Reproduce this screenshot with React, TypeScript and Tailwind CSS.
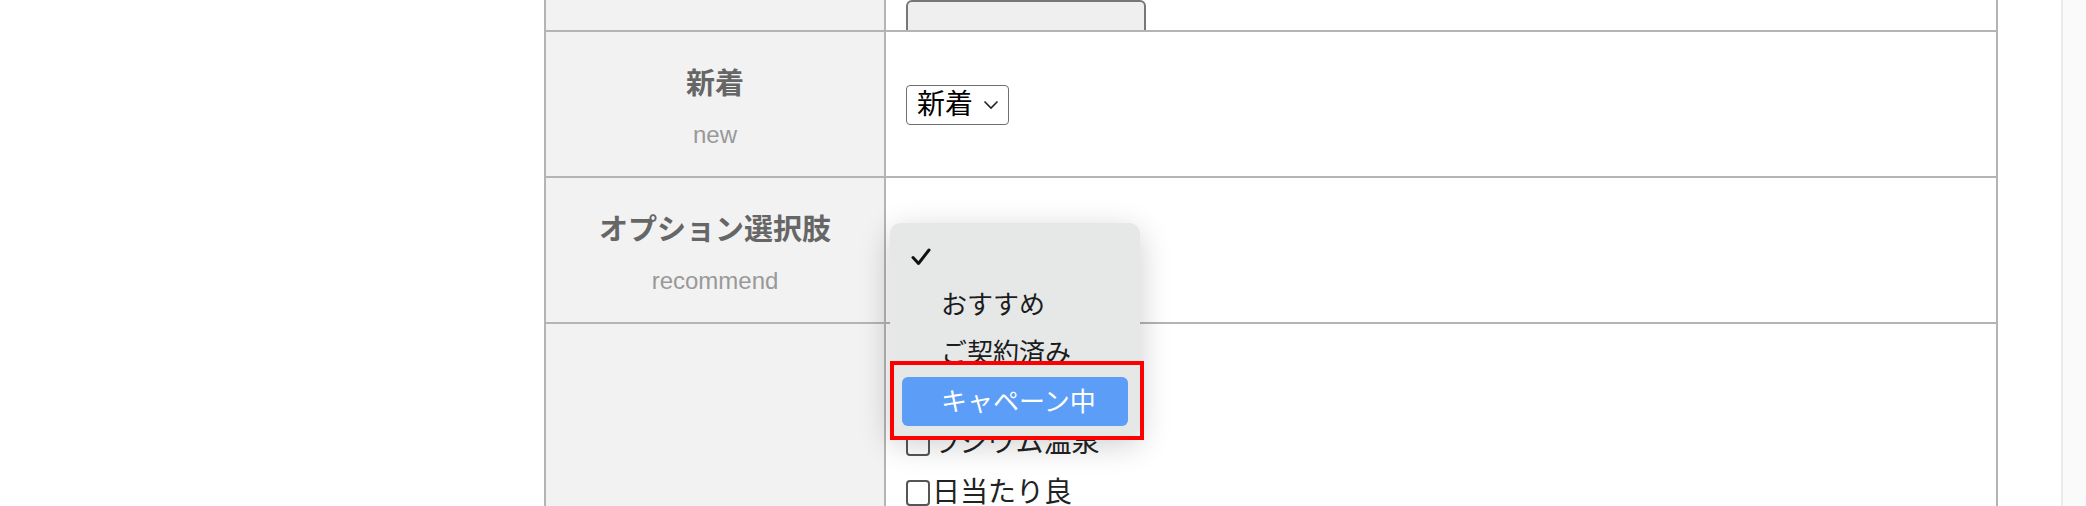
import React from 'react';

const jp = "font-['Liberation_Sans','Noto_Sans_CJK_JP',sans-serif]";

const menuItems = ['おすすめ', 'ご契約済み'];

const Label: React.FC<{ title: string; sub: string }> = ({ title, sub }) => (
  <div className="flex flex-col items-center justify-center bg-[#f2f2f2] pt-[8px]">
    <div className="text-[29px] font-bold leading-[40px] text-[#666]">{title}</div>
    <div className="mt-[14px] text-[24px] leading-[34px] text-[#999]">{sub}</div>
  </div>
);

const App: React.FC = () => {
  return (
    <div className={`flex h-[506px] w-[2086px] overflow-hidden bg-white ${jp}`}>
      <div className="w-[544px] shrink-0" />

      <div className="relative flex w-[1454px] shrink-0 flex-col border-x-2 border-[#b4b4b4]">
        {/* row cut off at the top */}
        <div className="grid h-[32px] shrink-0 grid-cols-[338px_2px_1fr] overflow-hidden border-b-2 border-[#b4b4b4]">
          <div className="bg-[#f2f2f2]" />
          <div className="bg-[#b4b4b4]" />
          <div className="flex items-end pb-[22px] pl-[20px]">
            <div className="h-[40px] w-[240px] shrink-0 rounded-[6px] border-2 border-[#777] bg-[#efefef]" />
          </div>
        </div>

        <div className="grid h-[146px] shrink-0 grid-cols-[338px_2px_1fr] border-b-2 border-[#b4b4b4]">
          <Label title="新着" sub="new" />
          <div className="bg-[#b4b4b4]" />
          <div className="flex items-center pl-[20px] pt-[2px]">
            <div className="flex h-[40px] w-[103px] items-center gap-[10px] rounded-[4px] border-[1.5px] border-[#6f6f6f] pl-[10px] text-[28px] leading-none text-black">
              <span>新着</span>
              <svg width="16" height="10" viewBox="0 0 16 10" fill="none">
                <path d="M1.5 1.5 L8 8 L14.5 1.5" stroke="#222" strokeWidth="1.6" />
              </svg>
            </div>
          </div>
        </div>

        <div className="grid h-[146px] shrink-0 grid-cols-[338px_2px_1fr] border-b-2 border-[#b4b4b4]">
          <Label title="オプション選択肢" sub="recommend" />
          <div className="bg-[#b4b4b4]" />
          <div />
        </div>

        <div className="grid min-h-0 flex-1 grid-cols-[338px_2px_1fr]">
          <div className="bg-[#f2f2f2]" />
          <div className="bg-[#b4b4b4]" />
          <div className="flex flex-col pl-[20px] pt-[44px] text-[28px] leading-[50px] text-[#222]">
            {['キッチン広め', 'ラジウム温泉', '日当たり良'].map((t) => (
              <div key={t} className="flex shrink-0 items-center">
                <span className="mr-[2px] inline-block h-[26px] w-[24px] rounded-[4px] border-2 border-[#555]" />
                {t}
              </div>
            ))}
          </div>
        </div>

        {/* open option menu */}
        <div className="absolute left-[344px] top-[223px] flex w-[250px] flex-col rounded-[11px] bg-[#e6e8e8] px-[12px] py-[10px] text-[26px] text-[#1c1c1c] shadow-[0_8px_32px_rgba(0,0,0,0.2)]">
          <div className="flex h-[48px] items-center pl-[9px]">
            <svg width="20" height="18" viewBox="0 0 20 18" fill="none">
              <path d="M2 9.5 L7.5 15.5 L18 2" stroke="#111" strokeWidth="3" strokeLinecap="round" strokeLinejoin="round" />
            </svg>
          </div>
          {menuItems.map((m) => (
            <div key={m} className="flex h-[48px] items-center pl-[39px] leading-none">
              {m}
            </div>
          ))}
          <div className="flex h-[49px] items-center rounded-[6px] bg-[#5b9df7] pl-[39px] leading-none text-white">
            キャペーン中
          </div>
        </div>

        {/* annotation */}
        <div className="absolute left-[344px] top-[361px] h-[79px] w-[254px] border-4 border-[#ff0000]" />
      </div>

      <div className="flex-1" />
      <div className="w-[25px] shrink-0 border-l-2 border-[#ebebeb] bg-[#fafafa]" />
    </div>
  );
};

export default App;
